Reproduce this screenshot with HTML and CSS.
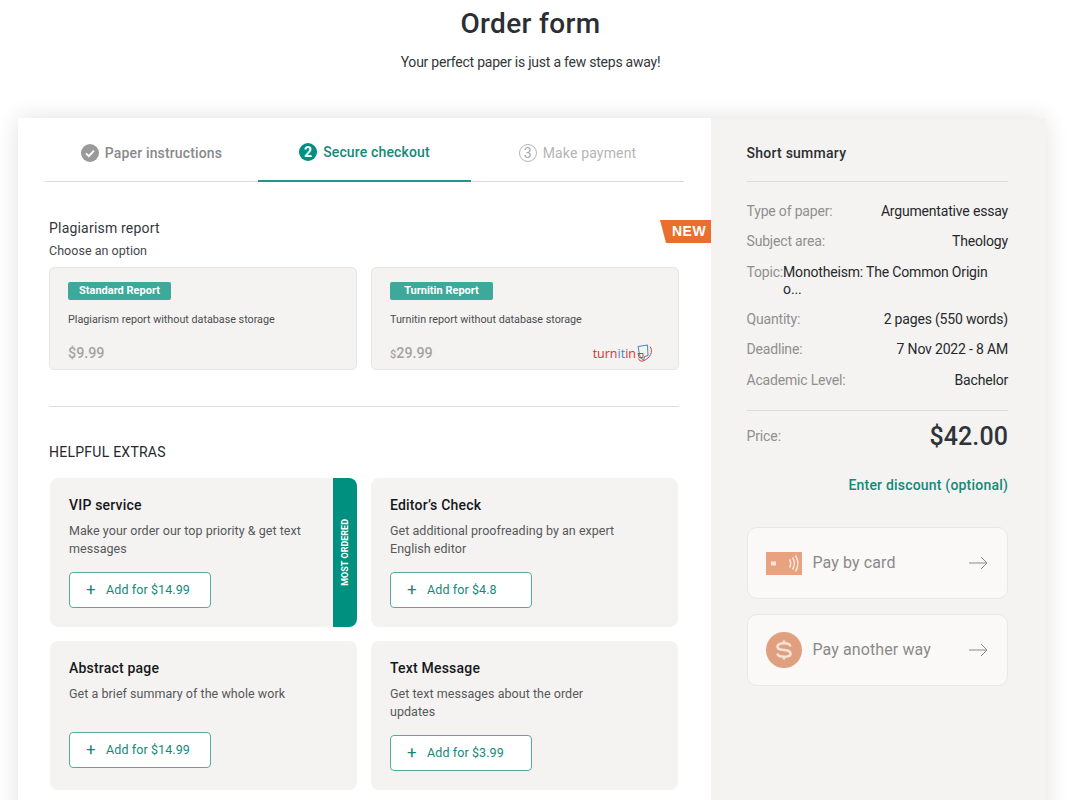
FILE: index.html
```html
<!DOCTYPE html>
<html lang="en">
<head>
<meta charset="utf-8">
<title>Order form</title>
<link rel="stylesheet" href="styles.css">
</head>
<body>
<header class="page-head">
  <h1>Order form</h1>
  <p>Your perfect paper is just a few steps away!</p>
</header>
<main class="shell">
  <section class="left">
    <nav class="tabs">
      <div class="tab tab-done">
        <svg class="step" viewBox="0 0 18 18"><circle cx="9" cy="9" r="9" fill="#9a9a9a"/><path d="M5 9.400l2.800 2.700L13 6.600" fill="none" stroke="#fff" stroke-width="2"/></svg>
        Paper instructions
      </div>
      <div class="tab tab-active"><span class="num num-active">2</span>Secure checkout</div>
      <div class="tab tab-next"><span class="num num-next">3</span>Make payment</div>
    </nav>
    <div class="content">
      <div class="new-badge">NEW</div>
      <h2 class="section-title">Plagiarism report</h2>
      <p class="choose">Choose an option</p>
      <div class="grid reports">
        <article class="report">
          <span class="tag">Standard Report</span>
          <p class="report-desc">Plagiarism report without database storage</p>
          <div class="report-foot"><b class="price">$9.99</b></div>
        </article>
        <article class="report">
          <span class="tag">Turnitin Report</span>
          <p class="report-desc">Turnitin report without database storage</p>
          <div class="report-foot">
            <b class="price"><small>$</small>29.99</b>
            <span class="turnitin">turn<i>it</i>in<svg viewBox="0 0 18 18" class="t-icon"><path d="M2 2.500L11.500 1l.5 10.500-3.500 1-.7 3.500-3.500-2z" fill="none" stroke="#3f86c4" stroke-width="1"/><path d="M14 2.500c3.500 5 .5 11.500-7 14.500-2.500.5-4-.5-4.500-2.500" fill="none" stroke="#d8393b" stroke-width="1"/><path d="M2 9.500h5v4H3z" fill="none" stroke="#d8393b" stroke-width="1"/></svg></span>
          </div>
        </article>
      </div>
      <hr class="divider">
      <h2 class="extras-title">HELPFUL EXTRAS</h2>
      <div class="grid extras">
        <article class="extra">
          <h3>VIP service</h3>
          <p>Make your order our top priority &amp; get text messages</p>
          <button class="add"><span class="plus">+</span>Add for $14.99</button>
          <div class="ribbon"><span>MOST ORDERED</span></div>
        </article>
        <article class="extra">
          <h3>Editor’s Check</h3>
          <p>Get additional proofreading by an expert English editor</p>
          <button class="add"><span class="plus">+</span>Add for $4.8</button>
        </article>
        <article class="extra">
          <h3>Abstract page</h3>
          <p class="one-line">Get a brief summary of the whole work</p>
          <button class="add"><span class="plus">+</span>Add for $14.99</button>
        </article>
        <article class="extra">
          <h3>Text Message</h3>
          <p>Get text messages about the order updates</p>
          <button class="add"><span class="plus">+</span>Add for $3.99</button>
        </article>
      </div>
    </div>
  </section>
  <aside class="right">
    <h2 class="summary-title">Short summary</h2>
    <dl class="rows">
      <div class="row"><dt>Type of paper:</dt><dd>Argumentative essay</dd></div>
      <div class="row"><dt>Subject area:</dt><dd>Theology</dd></div>
      <div class="row row-topic"><dt>Topic:</dt><dd>Monotheism: The Common Origin o...</dd></div>
      <div class="row"><dt>Quantity:</dt><dd>2 pages (550 words)</dd></div>
      <div class="row"><dt>Deadline:</dt><dd>7 Nov 2022 - 8 AM</dd></div>
      <div class="row"><dt>Academic Level:</dt><dd>Bachelor</dd></div>
    </dl>
    <div class="total"><span>Price:</span><strong>$42.00</strong></div>
    <a class="discount">Enter discount (optional)</a>
    <button class="pay">
      <svg class="pay-icon" viewBox="0 0 36 36"><rect y="7" width="36" height="23" fill="#e8a27f"/><rect x="5" y="16.500" width="5" height="4" fill="#f8e6dc"/><path d="M23.500 14.500c1.500 2.500 1.500 5.500 0 8M26.500 12.500c2.200 3.500 2.200 8.500 0 12M29.500 10.500c3 5 3 11 0 16" fill="none" stroke="#f8e6dc" stroke-width="1.500"/></svg>
      <span class="pay-label">Pay by card</span>
      <svg class="arrow" viewBox="0 0 19 14"><path d="M0 7h18M12 1l6 6-6 6" fill="none" stroke="#8a8a8a" stroke-width="1"/></svg>
    </button>
    <button class="pay">
      <svg class="pay-icon" viewBox="0 0 36 36"><circle cx="18" cy="18" r="18" fill="#e0a080"/><path d="M24.500 14.500c-.5-2.500-3-3.300-6.500-3.300-4 0-6.500 1.200-6.500 3.500s2.500 3 6.500 3.300 6.500 1 6.500 3.500-2.500 3.300-6.500 3.300c-3.500 0-6-.8-6.500-3.300M18 8.500v3M18 24.500v3" fill="none" stroke="#f6e3d8" stroke-width="2.600"/></svg>
      <span class="pay-label">Pay another way</span>
      <svg class="arrow" viewBox="0 0 19 14"><path d="M0 7h18M12 1l6 6-6 6" fill="none" stroke="#8a8a8a" stroke-width="1"/></svg>
    </button>
  </aside>
</main>
</body>
</html>
```
FILE: styles.css
```css
* { box-sizing: border-box; }
html { overflow: hidden; height: 800px; }
body { margin: 0; font-family: Roboto, "Liberation Sans", sans-serif; color: #2b2f33; background: #fff; font-size: 14px; }
h1, h2, h3, p, dl, dd { margin: 0; }

.page-head { width: 1061px; text-align: center; height: 118px; }
.page-head h1 { font-size: 28px; font-weight: 500; line-height: 32px; padding-top: 8px; letter-spacing: .35px; color: #2b2f33; }
.page-head p { font-size: 14px; letter-spacing: -.23px; line-height: 20px; margin-top: 12px; color: #33373a; }

.shell { margin-left: 18px; width: 1028px; display: grid; grid-template-columns: 693px 335px; box-shadow: 0 0 22px rgba(0,0,0,.12); min-height: 760px; }
.left { background: #fff; padding: 0 27px; }
.right { background: #f5f3f1; padding: 0 38px 0 35.500px; }

.tabs { display: grid; grid-template-columns: repeat(3, 1fr); height: 64px; border-bottom: 1px solid #dcdcdc; }
.tab { display: flex; align-items: center; justify-content: center; gap: 6px; font-size: 14px; font-weight: 500; letter-spacing: .15px; padding-top: 6px; }
.tab-done { color: #8a8a8a; }
.tab-active { color: #14897a; border-bottom: 2px solid #1f968a; margin-bottom: -1px; padding-top: 5px; }
.tab-next { color: #b5b5b5; font-weight: 400; }
.step { width: 18px; height: 18px; }
.num { width: 18px; height: 18px; border-radius: 50%; display: flex; align-items: center; justify-content: center; font-size: 14px; }
.num-active { background: #009080; color: #fff; font-weight: 700; }
.num-next { border: 1px solid #b5b5b5; color: #a8a8a8; font-weight: 400; }

.content { position: relative; padding: 37px 5px 0 4px; }
.new-badge { position: absolute; right: -27px; top: 38px; width: 51px; height: 23px; background: #e96f2e; clip-path: polygon(0 0, 100% 0, 100% 100%, 6px 100%); color: #fff; font-family: "Liberation Sans", sans-serif; font-size: 14px; font-weight: 700; letter-spacing: .5px; line-height: 23px; padding-left: 12px; }
.section-title { font-size: 14px; font-weight: 400; line-height: 18px; letter-spacing: .2px; color: #33373a; }
.choose { font-size: 12.500px; line-height: 18px; margin-top: 5px; letter-spacing: .03px; color: #44484b; }
.grid { display: grid; grid-template-columns: 308px 308px; gap: 14px; }
.reports { margin-top: 7px; }
.report { height: 103px; background: #f5f3f1; border: 1px solid #e6e6e6; border-radius: 5px; padding: 14px 18px 0; display: flex; flex-direction: column; align-items: flex-start; }
.tag { background: #3ca99b; color: #fff; font-size: 11px; font-weight: 700; line-height: 18px; height: 18px; width: 103px; text-align: center; border-radius: 2px; }
.report-desc { font-size: 10.750px; line-height: 14px; margin-top: 13px; color: #4a4d50; }
.report-foot { margin-top: 17px; width: 100%; height: 18px; display: flex; justify-content: space-between; align-items: center; }
.price { font-size: 14.300px; line-height: 18px; font-weight: 500; color: #a3a3a3; }
.price small { font-size: 11px; line-height: 1; }
.turnitin { font-size: 12.500px; color: #dc2f32; letter-spacing: 0; display: flex; align-items: center; margin-right: 6px; font-family: "Open Sans", sans-serif; }
.turnitin i { font-style: normal; color: #3f86c4; }
.t-icon { width: 18px; height: 18px; margin-left: 0; }

.divider { border: 0; border-top: 1px solid #dcdcdc; margin: 36px 0 0; }
.extras-title { font-size: 14px; font-weight: 400; line-height: 18px; margin-top: 36px; letter-spacing: .25px; color: #26292c; }
.extras { margin-top: 17px; padding-left: 1px; grid-template-columns: 307px 307px; }
.extra { position: relative; height: 149px; background: #f5f3f1; border-radius: 8px; padding: 18px 19px 0; overflow: hidden; }
.extra h3 { font-size: 14px; font-weight: 500; line-height: 18px; letter-spacing: .2px; color: #15181b; }
.extra p { font-size: 12.500px; line-height: 18px; margin-top: 8px; letter-spacing: .04px; color: #55585b; width: 235px; }
.extra p.one-line { margin-bottom: 29px; }
.add { display: flex; align-items: center; width: 142px; height: 36px; margin-top: 14px; background: #fff; border: 1px solid #5aa9a0; border-radius: 4px; padding: 0 0 2px 16px; color: #14897a; font: 400 12.500px Roboto, "Liberation Sans", sans-serif; letter-spacing: .1px; }
.extra p.one-line + .add { margin-top: 0; }
.plus { font-size: 17px; width: 20px; text-align: left; line-height: 16px; }
.ribbon { position: absolute; right: 0; top: 0; bottom: 0; width: 24px; background: #009080; display: flex; align-items: center; justify-content: center; }
.ribbon span { writing-mode: vertical-rl; transform: rotate(180deg); color: #fff; font-size: 9px; font-weight: 700; }

.summary-title { font-size: 14px; font-weight: 500; line-height: 18px; padding: 26px 0 19px; border-bottom: 1px solid #dcdcdc; letter-spacing: .25px; color: #2b2f33; height: 64px; }
.rows { padding-top: 20.600px; border-bottom: 1px solid #dcdcdc; height: 229px; }
.row { display: flex; justify-content: space-between; font-size: 14px; letter-spacing: -.18px; line-height: 17px; margin-bottom: 13.500px; }
dt { color: #8f8f8f; }
dd { color: #26292c; text-align: right; }
.row-topic { justify-content: flex-start; margin-bottom: 13px; }
.row-topic dd { text-align: left; width: 210px; }
.total { display: flex; justify-content: space-between; align-items: center; margin-top: 9px; height: 32px; color: #8f8f8f; font-size: 14px; letter-spacing: -.12px; }
.total strong { font-size: 25px; font-weight: 500; letter-spacing: .1px; color: #303438; }
.discount { display: block; text-align: right; font-weight: 500; color: #14897a; margin-top: 24px; line-height: 18px; letter-spacing: .2px; }
.pay { display: flex; align-items: center; width: 261.500px; height: 72px; margin-top: 15px; background: #fbf9f7; border: 1px solid #e8e8e8; border-radius: 10px; padding: 0 19px 0 18px; font: 400 16px Roboto, "Liberation Sans", sans-serif; color: #8a8a8a; letter-spacing: .1px; }
.discount + .pay { margin-top: 33px; }
.pay-icon { width: 36px; height: 36px; }
.pay-label { margin-left: 11px; margin-bottom: 2px; flex: 1; text-align: left; }
.arrow { width: 19px; height: 14px; }
```
